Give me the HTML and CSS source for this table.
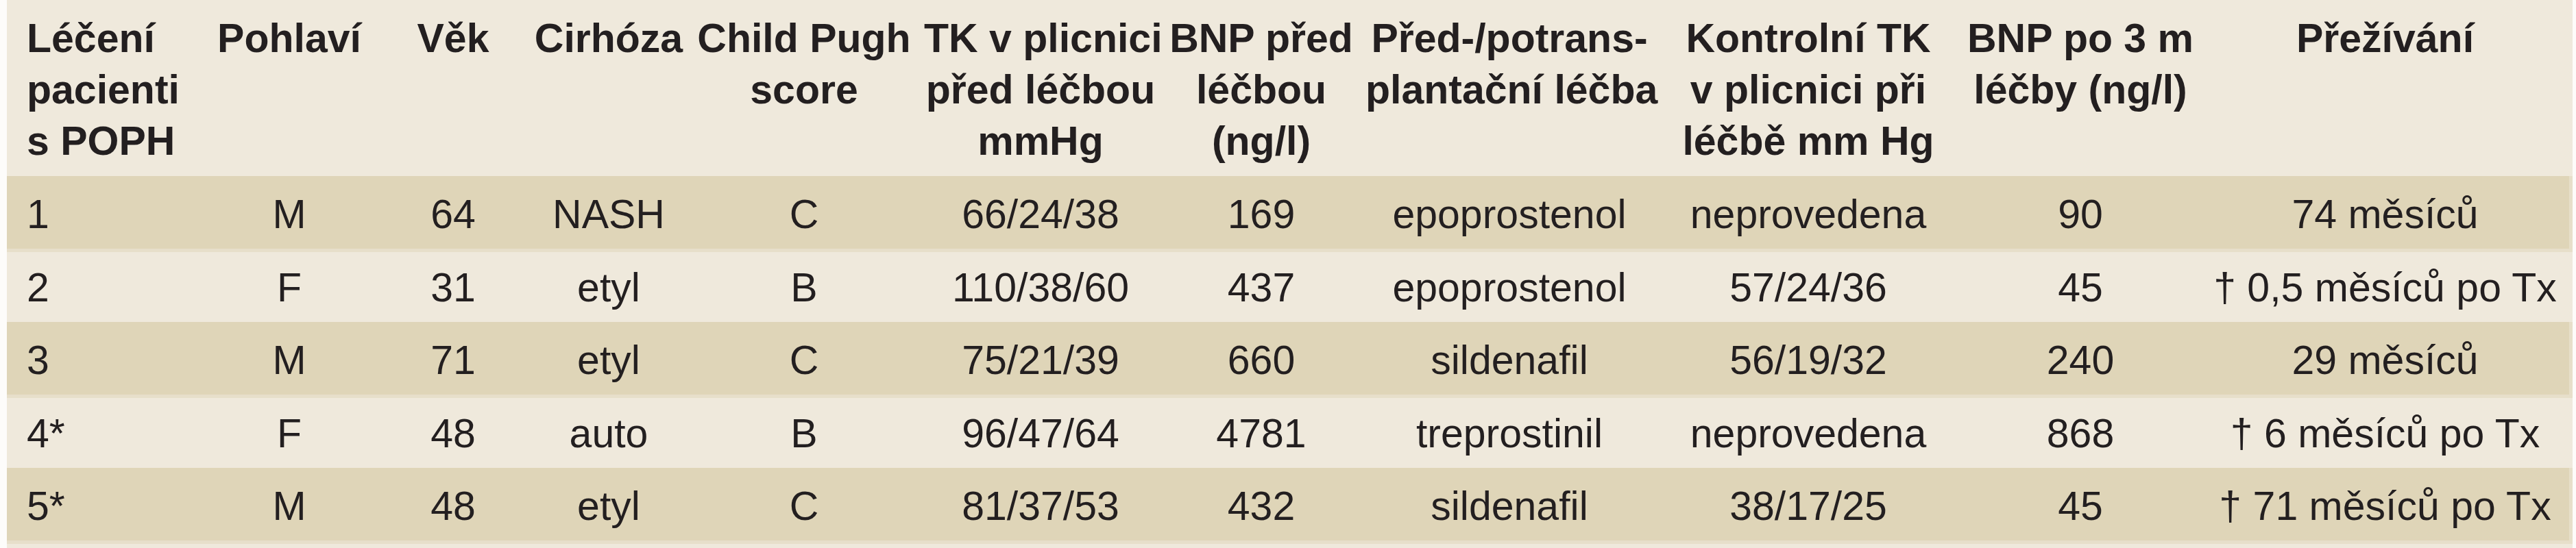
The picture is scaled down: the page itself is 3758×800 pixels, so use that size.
FILE: index.html
```html
<!DOCTYPE html>
<html lang="cs">
<head>
<meta charset="utf-8">
<title>Léčení pacienti s POPH</title>
<link rel="stylesheet" href="styles.css">
</head>
<body>
<div class="table">
  <div class="row head">
    <div class="cell first">Léčení<br>pacienti<br>s POPH</div>
    <div class="cell">Pohlaví</div>
    <div class="cell">Věk</div>
    <div class="cell">Cirhóza</div>
    <div class="cell">Child Pugh<br>score</div>
    <div class="cell">TK v plicnici<br>před léčbou<br>mmHg</div>
    <div class="cell">BNP před<br>léčbou<br>(ng/l)</div>
    <div class="cell">Před-/potrans-<br>plantační léčba</div>
    <div class="cell">Kontrolní TK<br>v plicnici při<br>léčbě mm Hg</div>
    <div class="cell">BNP po 3 m<br>léčby (ng/l)</div>
    <div class="cell">Přežívání</div>
  </div>
  <div class="row dark">
    <div class="cell first">1</div>
    <div class="cell">M</div>
    <div class="cell">64</div>
    <div class="cell">NASH</div>
    <div class="cell">C</div>
    <div class="cell">66/24/38</div>
    <div class="cell">169</div>
    <div class="cell">epoprostenol</div>
    <div class="cell">neprovedena</div>
    <div class="cell">90</div>
    <div class="cell">74 měsíců</div>
  </div>
  <div class="row light">
    <div class="cell first">2</div>
    <div class="cell">F</div>
    <div class="cell">31</div>
    <div class="cell">etyl</div>
    <div class="cell">B</div>
    <div class="cell">110/38/60</div>
    <div class="cell">437</div>
    <div class="cell">epoprostenol</div>
    <div class="cell">57/24/36</div>
    <div class="cell">45</div>
    <div class="cell">† 0,5 měsíců po Tx</div>
  </div>
  <div class="row dark">
    <div class="cell first">3</div>
    <div class="cell">M</div>
    <div class="cell">71</div>
    <div class="cell">etyl</div>
    <div class="cell">C</div>
    <div class="cell">75/21/39</div>
    <div class="cell">660</div>
    <div class="cell">sildenafil</div>
    <div class="cell">56/19/32</div>
    <div class="cell">240</div>
    <div class="cell">29 měsíců</div>
  </div>
  <div class="row light">
    <div class="cell first">4*</div>
    <div class="cell">F</div>
    <div class="cell">48</div>
    <div class="cell">auto</div>
    <div class="cell">B</div>
    <div class="cell">96/47/64</div>
    <div class="cell">4781</div>
    <div class="cell">treprostinil</div>
    <div class="cell">neprovedena</div>
    <div class="cell">868</div>
    <div class="cell">† 6 měsíců po Tx</div>
  </div>
  <div class="row dark">
    <div class="cell first">5*</div>
    <div class="cell">M</div>
    <div class="cell">48</div>
    <div class="cell">etyl</div>
    <div class="cell">C</div>
    <div class="cell">81/37/53</div>
    <div class="cell">432</div>
    <div class="cell">sildenafil</div>
    <div class="cell">38/17/25</div>
    <div class="cell">45</div>
    <div class="cell">† 71 měsíců po Tx</div>
  </div>
</div>
</body>
</html>
```
FILE: styles.css
```css
html, body {
  margin: 0;
  padding: 0;
  background: #fdfcfa;
}

body {
  font-family: "Liberation Sans", Arial, sans-serif;
  color: #231f20;
  font-size: 59px;
  line-height: 75px;
}

.table {
  margin-left: 10px;
  width: 3743px;
  background: #efe9dc;
  padding-bottom: 6px;
}

.row {
  display: grid;
  grid-template-columns: 290px 244px 234px 220px 350px 340px 304px 420px 452px 342px 547px;
  align-items: center;
  box-sizing: border-box;
}

.cell {
  text-align: center;
  white-space: nowrap;
}

.cell.first {
  text-align: left;
  padding-left: 29px;
}

.head {
  height: 257px;
  align-items: start;
  padding-top: 19px;
  font-weight: 700;
}

.dark {
  height: 111px;
  padding-top: 6px;
  padding-bottom: 5px;
  background: #dfd5b8;
  box-shadow: inset -5px -5px 0 #e7dfca;
}

.light {
  height: 102px;
  padding-top: 3px;
}
```
